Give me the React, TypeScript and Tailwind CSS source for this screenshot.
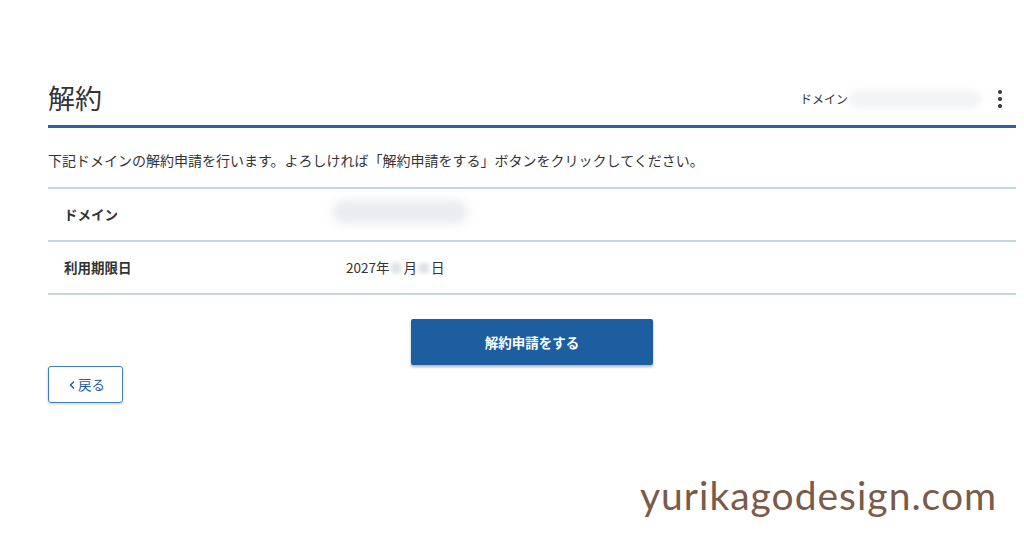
import { ChevronLeft } from 'lucide-react';

// masked value placeholder (blurred pill)
const Masked = ({ className }: { className: string }) => (
  <span className={`inline-block rounded-full ${className}`} />
);

const rows = [
  {
    label: 'ドメイン',
    value: (
      <Masked className="-ml-[14px] h-[24px] w-[136px] bg-gray-200/80 blur-[5px]" />
    ),
  },
  {
    label: '利用期限日',
    value: (
      <span className="flex items-center">
        2027年
        <Masked className="mx-[1px] h-[12px] w-[12px] bg-gray-300/70 blur-[2px]" />
        月
        <Masked className="mx-[1px] h-[12px] w-[12px] bg-gray-300/70 blur-[2px]" />
        日
      </span>
    ),
  },
];

const App = () => {
  return (
    <div className="relative h-[538px] w-[1024px] overflow-hidden bg-white font-['Noto_Sans_CJK_JP','Noto_Sans',sans-serif] text-[#333]">
      <div className="px-[48px] pt-[80px] pr-[8px]">
        <div className="flex items-end justify-between border-b-[3px] border-[#2b62a6] pb-[9px]">
          <h1 className="text-[27px] leading-[36px] text-[#333]">解約</h1>
          <div className="mb-[8px] flex items-center">
            <span className="text-[12px]">ドメイン</span>
            <Masked className="h-[18px] w-[134px] bg-gray-100 blur-[3px]" />
            <div className="ml-[16px] mr-[14px] flex flex-col gap-[3px]">
              <span className="h-[4px] w-[4px] rounded-full bg-[#333]" />
              <span className="h-[4px] w-[4px] rounded-full bg-[#333]" />
              <span className="h-[4px] w-[4px] rounded-full bg-[#333]" />
            </div>
          </div>
        </div>

        <p className="mt-[22px] text-[14px] leading-[20px]">
          下記ドメインの解約申請を行います。よろしければ「解約申請をする」ボタンをクリックしてください。
        </p>

        <div className="mt-[17px] border-t-2 border-[#c5d6e6]">
          {rows.map((row) => (
            <div
              key={row.label}
              className="flex h-[53px] items-center border-b-2 border-[#c5d6e6] text-[13.5px]"
            >
              <div className="w-[298px] pl-[16px] font-bold">{row.label}</div>
              <div>{row.value}</div>
            </div>
          ))}
        </div>

        <div className="mt-[24px] flex justify-center">
          <button className="h-[46px] w-[242px] rounded-[2px] bg-[#1c5ea0] text-[13.5px] font-bold text-white shadow-[0_2px_3px_rgba(0,0,0,0.3)]">
            解約申請をする
          </button>
        </div>

        <button className="mt-[1px] flex h-[37px] w-[75px] items-center justify-center rounded-[3px] border border-[#3f7cc0] text-[13.5px] text-[#1c5ea0] shadow-[0_1px_3px_rgba(0,0,0,0.2)]">
          <ChevronLeft size={12} strokeWidth={3} />
          戻る
        </button>
      </div>

      <div className="absolute left-[640px] top-[470px] font-['Lato',sans-serif] text-[39px] leading-[50px] tracking-[1px] text-[#7b5a47]">
        yurikagodesign.com
      </div>
    </div>
  );
};

export default App;
